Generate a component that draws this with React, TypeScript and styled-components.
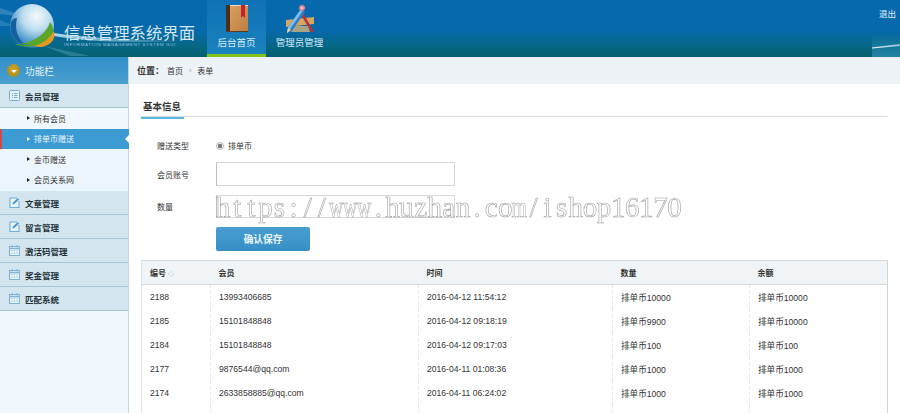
import React from 'react'
import styled, { createGlobalStyle } from 'styled-components'

const GlobalStyle = createGlobalStyle`
  html, body {
    margin: 0;
    padding: 0;
    background: #fff;
  }
  body {
    font-family: "Liberation Sans", "Noto Sans CJK SC", sans-serif;
    color: #333;
  }
`

const Page = styled.div`
  position: relative;
  width: 900px;
  height: 413px;
  overflow: hidden;
  display: flex;
  flex-direction: column;
`

const Header = styled.header`
  position: relative;
  height: 57px;
  flex: none;
  display: flex;
  background: linear-gradient(180deg, #0669ad 0%, #0669ac 52%, #06667f 85%, #055f6e 100%);
`

const Brand = styled.div`
  position: relative;
  width: 207px;
  flex: none;
  padding: 24px 0 0 64px;
  box-sizing: border-box;
`

const BrandArt = styled.svg`
  position: absolute;
  left: 0;
  top: 0;
`

const BrandTitle = styled.div`
  position: relative;
  font-size: 16.4px;
  line-height: 18px;
  color: #d3e8f4;
  white-space: nowrap;
`

const BrandSub = styled.div`
  position: relative;
  font-size: 4.4px;
  line-height: 6px;
  letter-spacing: 0.62px;
  color: #8fc0dc;
  white-space: nowrap;
`

const NavItem = styled.div<{ $active?: boolean }>`
  width: ${(p) => (p.$active ? '59px' : '67px')};
  height: 57px;
  box-sizing: border-box;
  display: flex;
  flex-direction: column;
  align-items: center;
  padding-top: 4px;
  font-size: 9.5px;
  line-height: 12px;
  color: #d5ebf7;
  white-space: nowrap;
  background: ${(p) => (p.$active ? 'linear-gradient(180deg, #0f72b5 0%, #1a82bd 100%)' : 'transparent')};
  border-bottom: ${(p) => (p.$active ? '3px solid #7fc31c' : '0')};

  svg {
    height: 30px;
    margin-bottom: 3px;
    flex: none;
  }
`

const Logout = styled.div`
  margin-left: auto;
  padding: 8px 4px 0 0;
  font-size: 8.5px;
  line-height: 12px;
  color: #e3f1fa;
`

const Glint = styled.svg`
  position: absolute;
  right: 0;
  bottom: 0;
`

const Body = styled.div`
  flex: 1;
  display: flex;
  min-height: 0;
`

const Sidebar = styled.aside`
  width: 129px;
  flex: none;
  box-sizing: border-box;
  border-right: 1px solid #c3d6df;
  background: #f0f8fe;
`

const SideTitle = styled.div`
  height: 27px;
  display: flex;
  align-items: center;
  gap: 5px;
  padding-left: 7px;
  font-size: 9.7px;
  color: #e6f3fa;
  background: linear-gradient(180deg, #2f8fc9 0%, #4a9fcd 100%);
`

const SideBadge = styled.span`
  width: 13px;
  height: 13px;
  border-radius: 50%;
  background: radial-gradient(circle at 50% 40%, #d9a520 0%, #b49220 55%, #8a9a20 100%);
  display: flex;
  align-items: center;
  justify-content: center;

  &::after {
    content: '';
    border-left: 3px solid transparent;
    border-right: 3px solid transparent;
    border-top: 3px solid #fff;
    margin-top: 1px;
  }
`

const Group = styled.div`
  height: 23px;
  display: flex;
  align-items: center;
  gap: 5px;
  padding-left: 9px;
  font-size: 8.5px;
  font-weight: 700;
  color: #26333b;
  background: #d3e6f0;
  border-bottom: 1px solid #a8c5d5;
  white-space: nowrap;
`

const SubList = styled.div`
  padding: 0 0 1px;
  background: linear-gradient(180deg, #f1f9fe 0%, #e9f4fb 100%);
`

const SubItem = styled.div<{ $active?: boolean }>`
  position: relative;
  height: 20.5px;
  display: flex;
  align-items: center;
  gap: 4px;
  box-sizing: border-box;
  padding-left: ${(p) => (p.$active ? '25px' : '27px')};
  font-size: 8px;
  color: ${(p) => (p.$active ? '#eaf6fc' : '#333')};
  background: ${(p) => (p.$active ? '#3d9bd3' : 'transparent')};
  border-left: ${(p) => (p.$active ? '2px solid #d2474c' : '0')};
  margin-right: ${(p) => (p.$active ? '-1px' : '0')};

  &::before {
    content: '';
    border-top: 2.5px solid transparent;
    border-bottom: 2.5px solid transparent;
    border-left: 3px solid ${(p) => (p.$active ? '#fff' : '#223')};
  }

  &::after {
    content: '';
    display: ${(p) => (p.$active ? 'block' : 'none')};
    position: absolute;
    right: 0;
    top: 6px;
    border-top: 4px solid transparent;
    border-bottom: 4px solid transparent;
    border-right: 4px solid #fff;
  }
`

const Main = styled.main`
  flex: 1;
  min-width: 0;
  display: flex;
  flex-direction: column;
`

const Crumbs = styled.div`
  height: 27px;
  flex: none;
  display: flex;
  align-items: center;
  padding-left: 8px;
  font-size: 8px;
  color: #333;
  background: #edf2f6;
`

const CrumbLabel = styled.b`
  font-size: 9px;
  margin-right: 3px;
`

const CrumbSep = styled.span`
  margin: 0 6px;
  color: #999;
  font-size: 7px;
`

const Content = styled.div`
  padding: 12px 13px 0 12px;
`

const Tabs = styled.div`
  height: 20px;
  border-bottom: 1px solid #d5dde2;
`

const Tab = styled.div`
  display: inline-block;
  box-sizing: border-box;
  width: 43px;
  height: 21px;
  padding-left: 2px;
  font-size: 9.5px;
  line-height: 18px;
  font-weight: 700;
  color: #333;
  white-space: nowrap;
  border-bottom: 2px solid #5db7dc;
`

const Form = styled.div`
  padding: 21px 0 0 16px;
`

const FormRow = styled.div<{ $height: number }>`
  display: flex;
  align-items: center;
  height: ${(p) => p.$height}px;
  margin-bottom: 9px;
`

const Label = styled.div`
  width: 59px;
  flex: none;
  font-size: 8px;
  color: #333;
`

const Radio = styled.span`
  width: 8px;
  height: 8px;
  box-sizing: border-box;
  border-radius: 50%;
  border: 1px solid #bbb;
  background: radial-gradient(circle, #777 0 2px, #eee 2.4px);
  margin-right: 4px;
`

const RadioText = styled.span`
  font-size: 8px;
  color: #333;
`

const TextInput = styled.div`
  width: 239px;
  height: 100%;
  box-sizing: border-box;
  border: 1px solid #d4d9dc;
  border-left-color: #b9bfc3;
  background: #fff;
`

const SaveButton = styled.div`
  width: 94px;
  height: 24px;
  margin-left: 59px;
  border-radius: 2px;
  display: flex;
  align-items: center;
  justify-content: center;
  font-size: 9.7px;
  font-weight: 700;
  color: #eaf5fb;
  background: linear-gradient(180deg, #4a9ed0 0%, #348fc6 100%);
`

const Table = styled.table`
  width: 746px;
  margin-top: 9px;
  border-collapse: collapse;
  table-layout: fixed;
  border-top: 1px solid #d5dadd;
  border-left: 1px solid #dfe3e5;
  border-right: 1px solid #d0d5d8;
`

const Th = styled.th<{ $width: number }>`
  width: ${(p) => p.$width}px;
  height: 24px;
  padding: 0 0 0 8px;
  box-sizing: border-box;
  font-size: 8px;
  font-weight: 700;
  text-align: left;
  color: #333;
  background: #f1f4f6;
  border-bottom: 1px solid #d5dadd;
`

const Td = styled.td`
  height: 24px;
  padding: 0 0 0 8px;
  font-size: 8.6px;
  color: #333;
  white-space: nowrap;
  border-left: 1px dashed #e6e8ea;

  &:first-child {
    border-left: 0;
  }
`

const SortMark = styled.span`
  font-weight: 400;
  font-size: 6px;
  color: #999;
  margin-left: 2px;
`

const Watermark = styled.div`
  position: absolute;
  left: 216px;
  top: 190px;
  display: flex;
  font-family: "Liberation Serif", serif;
  font-size: 29px;
  line-height: 34px;
  color: rgba(255, 255, 255, 0.6);
  -webkit-text-stroke: 0.6px #a2a2a2;
  pointer-events: none;
`

const WatermarkChar = styled.span<{ $squeeze?: boolean }>`
  display: flex;
  justify-content: center;
  width: 14.12px;
  flex: none;
  white-space: nowrap;
  transform: ${(p) => (p.$squeeze ? 'scaleX(0.68)' : 'translateZ(0)')};
`

const ListIcon = () => (
  <svg width="11" height="11" viewBox="0 0 11 11" fill="none" stroke="#76add0">
    <rect x="0.5" y="0.5" width="10" height="10" rx="1" fill="#e6f2f8" />
    <path d="M3 3.5h1M5 3.5h3.5M3 5.5h1M5 5.5h3.5M3 7.5h1M5 7.5h3.5" />
  </svg>
)

const EditIcon = () => (
  <svg width="11" height="11" viewBox="0 0 11 11" fill="none">
    <path d="M8 1H1v9.5h9V4" stroke="#74aed2" strokeWidth="1.1" fill="#e9f4fa" />
    <path d="M3.5 7.5 4 5.6 8.6 1.2l1.5 1.3L5.4 7z" fill="#4d97c6" />
  </svg>
)

const CalendarIcon = () => (
  <svg width="11" height="11" viewBox="0 0 11 11" fill="none" stroke="#7fb3d2">
    <rect x="0.5" y="1.5" width="10" height="9" fill="#e6f2f8" />
    <path d="M0.5 3.5h10" strokeWidth="1.4" />
    <path d="M3 0v2.5M8 0v2.5" />
    <path d="M2.5 5.5h1M5 5.5h1M7.5 5.5h1M2.5 8h1M5 8h1M7.5 8h1" />
  </svg>
)

const BookIcon = () => (
  <svg width="26" viewBox="0 0 26 30">
    <defs>
      <linearGradient id="cover" x1="0" x2="1" y1="0" y2="1">
        <stop offset="0" stopColor="#d9a060" />
        <stop offset="1" stopColor="#bd7f42" />
      </linearGradient>
    </defs>
    <rect x="2" y="1" width="22" height="26" fill="#f1ddc0" />
    <rect x="6" y="2" width="18" height="25" fill="url(#cover)" />
    <rect x="2" y="1" width="4" height="26" fill="#4b2d1a" />
    <path d="M17 1h4v13l-2-2-2 2z" fill="#c4232b" />
    <rect x="2" y="27" width="22" height="1" fill="#5b3a20" />
  </svg>
)

const ToolsIcon = () => (
  <svg width="34" viewBox="0 0 34 30">
    <path d="M3 16 31 13v7L3 23z" fill="#d9a65f" />
    <path d="M19 7 31 28h-3L17 9z" fill="#b8323a" />
    <path d="M10 22h15l2 6H8z" fill="#e0b878" opacity="0.75" />
    <path d="M18 5 22 8 9 27l-5 2 1-6z" fill="#2f7fc6" />
    <path d="M18 5 20 6.5 6.5 26 4 29l1-6z" fill="#7fbce8" />
    <path d="M4 29l1-5 3 2z" fill="#e9cfa0" />
    <circle cx="19" cy="4" r="3" fill="#ea7f94" />
    <circle cx="19" cy="4" r="1.2" fill="#f7d3da" />
  </svg>
)

const groupsAfter: [string, React.ReactNode][] = [
  ['文章管理', <EditIcon />],
  ['留言管理', <EditIcon />],
  ['激活码管理', <CalendarIcon />],
  ['奖金管理', <CalendarIcon />],
  ['匹配系统', <CalendarIcon />],
]

const rows = [
  ['2188', '13993406685', '2016-04-12 11:54:12', '排单币10000', '排单币10000'],
  ['2185', '15101848848', '2016-04-12 09:18:19', '排单币9900', '排单币10000'],
  ['2184', '15101848848', '2016-04-12 09:17:03', '排单币100', '排单币100'],
  ['2177', '9876544@qq.com', '2016-04-11 01:08:36', '排单币1000', '排单币1000'],
  ['2174', '2633858885@qq.com', '2016-04-11 06:24:02', '排单币1000', '排单币1000'],
  ['', '', '', '', ''],
]

const watermark = 'https://www.huzhan.com/ishop16170'

export default function App() {
  return (
    <Page>
      <GlobalStyle />
      <Header>
        <Brand>
          <BrandArt width="207" height="57" viewBox="0 0 207 57">
            <defs>
              <radialGradient id="glass" cx="0.6" cy="0.28" r="0.8">
                <stop offset="0" stopColor="#f4fafd" />
                <stop offset="0.4" stopColor="#bcdcee" />
                <stop offset="0.8" stopColor="#3f8fc8" />
                <stop offset="1" stopColor="#135f9e" />
              </radialGradient>
              <linearGradient id="streak" x1="0" x2="1" y1="0" y2="0">
                <stop offset="0" stopColor="#bfe6f5" stopOpacity="0.9" />
                <stop offset="1" stopColor="#bfe6f5" stopOpacity="0" />
              </linearGradient>
            </defs>
            <path d="M0 8 30 18 0 14z" fill="#5fa8cf" opacity="0.45" />
            <path d="M0 20 14 26 0 26z" fill="#5fa8cf" opacity="0.35" />
            <path d="M54 33C90 38 130 40 190 41 130 43 90 42 54 36z" fill="url(#streak)" />
            <path d="M44 46 90 56H70z" fill="#7fc0d8" opacity="0.3" />
            <circle cx="32" cy="26" r="22" fill="url(#glass)" />
            <path d="M11 22C9 32 14 42 24 44 18 38 14 30 17 18 14 18 12 20 11 22z" fill="#14609f" />
            <path d="M15 44C30 44 46 36 50 22 55 28 54 38 47 43 38 47 24 48 15 44z" fill="#5aa62c" />
            <path d="M34 46C43 44 50 38 54 31 56 38 52 44 45 46 42 47.5 37 47 34 46z" fill="#e79a22" />
            <path d="M10 36C14 44 24 45 32 44 24 46 14 46 10 36z" fill="#1a71b5" />
          </BrandArt>
          <BrandTitle>信息管理系统界面</BrandTitle>
          <BrandSub>INFORMATION MANAGEMENT SYSTEM GUI</BrandSub>
        </Brand>
        <NavItem $active>
          <BookIcon />
          后台首页
        </NavItem>
        <NavItem>
          <ToolsIcon />
          管理员管理
        </NavItem>
        <Logout>退出</Logout>
        <Glint width="28" height="24" viewBox="0 0 28 24">
          <defs>
            <linearGradient id="glint" x1="0" x2="1" y1="0" y2="0">
              <stop offset="0" stopColor="#fff" stopOpacity="0.95" />
              <stop offset="1" stopColor="#d6f0fa" stopOpacity="0.6" />
            </linearGradient>
            <linearGradient id="glow" x1="0" x2="0" y1="0" y2="1">
              <stop offset="0" stopColor="#3a9ac8" stopOpacity="0" />
              <stop offset="1" stopColor="#3a9ac8" stopOpacity="0.6" />
            </linearGradient>
          </defs>
          <rect width="28" height="24" fill="url(#glow)" />
          <path d="M0 14.5 28 11v2L0 15.5z" fill="url(#glint)" />
        </Glint>
      </Header>
      <Body>
        <Sidebar>
          <SideTitle>
            <SideBadge />
            功能栏
          </SideTitle>
          <Group>
            <ListIcon />
            会员管理
          </Group>
          <SubList>
            <SubItem>所有会员</SubItem>
            <SubItem $active>排单币赠送</SubItem>
            <SubItem>金币赠送</SubItem>
            <SubItem>会员关系网</SubItem>
          </SubList>
          {groupsAfter.map(([name, icon]) => (
            <Group key={name}>
              {icon}
              {name}
            </Group>
          ))}
        </Sidebar>
        <Main>
          <Crumbs>
            <CrumbLabel>位置：</CrumbLabel>
            首页
            <CrumbSep>›</CrumbSep>
            表单
          </Crumbs>
          <Content>
            <Tabs>
              <Tab>基本信息</Tab>
            </Tabs>
            <Form>
              <FormRow $height={15}>
                <Label>赠送类型</Label>
                <Radio />
                <RadioText>排单币</RadioText>
              </FormRow>
              <FormRow $height={24}>
                <Label>会员账号</Label>
                <TextInput />
              </FormRow>
              <FormRow $height={23}>
                <Label>数量</Label>
                <TextInput />
              </FormRow>
              <SaveButton>确认保存</SaveButton>
            </Form>
            <Table>
              <thead>
                <tr>
                  <Th $width={69}>
                    编号<SortMark>◇</SortMark>
                  </Th>
                  <Th $width={208}>会员</Th>
                  <Th $width={194}>时间</Th>
                  <Th $width={137}>数量</Th>
                  <Th $width={138}>余额</Th>
                </tr>
              </thead>
              <tbody>
                {rows.map((row, r) => (
                  <tr key={r}>
                    {row.map((cell, i) => (
                      <Td key={i}>{cell}</Td>
                    ))}
                  </tr>
                ))}
              </tbody>
            </Table>
          </Content>
        </Main>
      </Body>
      <Watermark>
        {watermark.split('').map((ch, i) => (
          <WatermarkChar key={i} $squeeze={ch === 'w' || ch === 'm'}>
            {ch}
          </WatermarkChar>
        ))}
      </Watermark>
    </Page>
  )
}
